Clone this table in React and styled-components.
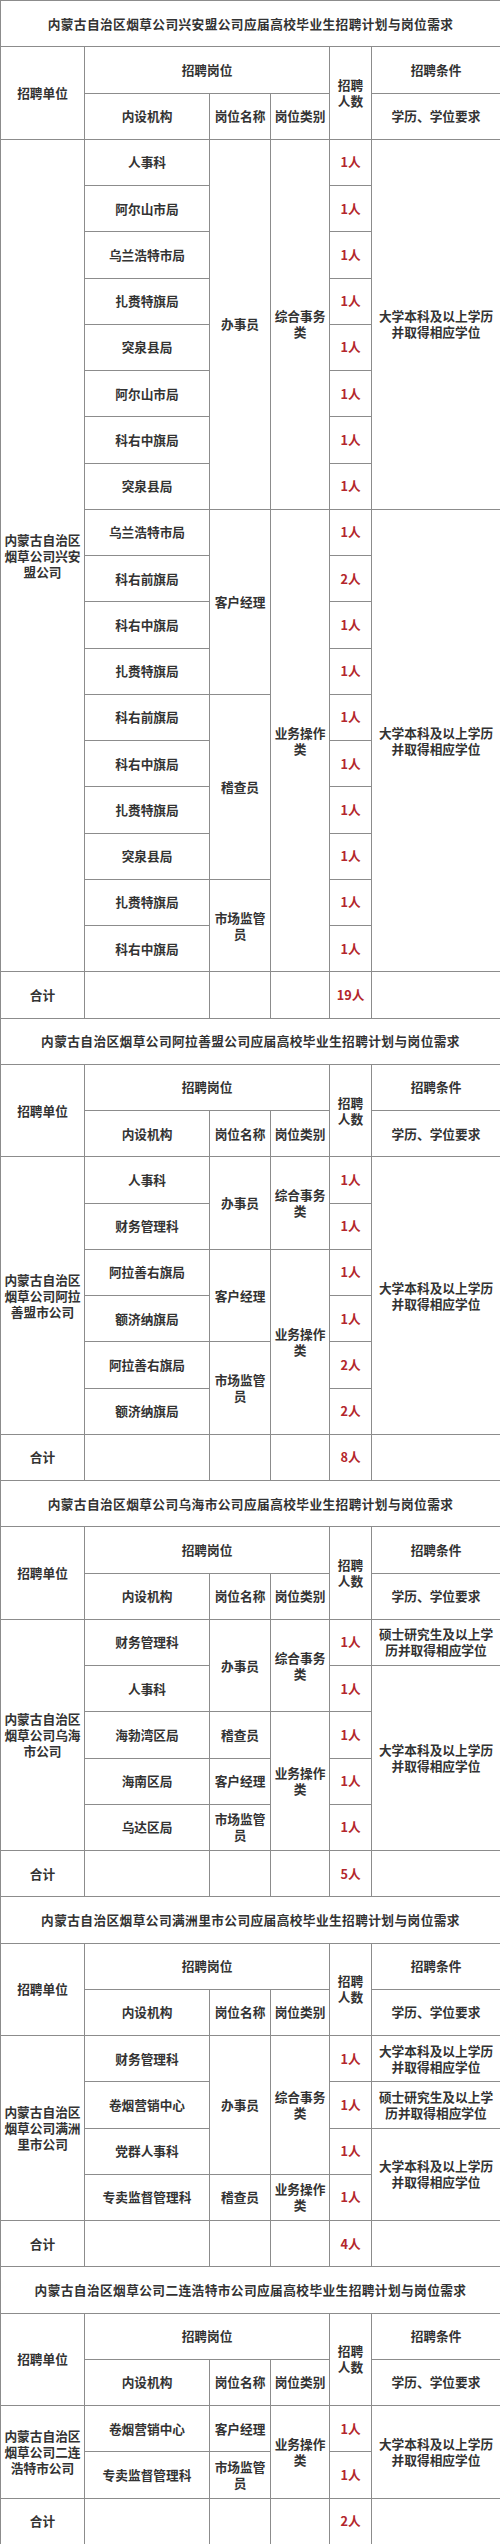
import React from "react";
import styled, { createGlobalStyle } from "styled-components";

const GlobalStyle = createGlobalStyle`
  html, body {
    margin: 0;
    padding: 0;
    background: #fff;
  }
  body {
    font-family: "Noto Sans CJK SC", "Liberation Serif", serif;
  }
`;

const Table = styled.table`
  width: 500px;
  border-collapse: collapse;
  table-layout: fixed;
  color: #333;
  font-size: 12.7px;
  font-weight: 700;
  line-height: 16px;
`;

const Row = styled.tr`
  height: 46.25px;
`;

const Cell = styled.td`
  border: 1px solid #8c8c8c;
  padding: 0 2px;
  text-align: center;
  vertical-align: middle;
  color: ${(props) => (props.$red ? "#b3262c" : "#333")};
  word-break: break-all;
`;

const TitleCell = styled(Cell)`
  letter-spacing: 0.4px;
`;

const NOTE_BK = "大学本科及以上学历并取得相应学位";
const NOTE_MA = "硕士研究生及以上学历并取得相应学位";

const sections = [
  {
    title: "内蒙古自治区烟草公司兴安盟公司应届高校毕业生招聘计划与岗位需求",
    unit: "内蒙古自治区烟草公司兴安盟公司",
    rows: [
      ["人事科", 1], ["阿尔山市局", 1], ["乌兰浩特市局", 1], ["扎赉特旗局", 1],
      ["突泉县局", 1], ["阿尔山市局", 1], ["科右中旗局", 1], ["突泉县局", 1],
      ["乌兰浩特市局", 1], ["科右前旗局", 2], ["科右中旗局", 1], ["扎赉特旗局", 1],
      ["科右前旗局", 1], ["科右中旗局", 1], ["扎赉特旗局", 1], ["突泉县局", 1],
      ["扎赉特旗局", 1], ["科右中旗局", 1],
    ],
    names: [["办事员", 8], ["客户经理", 4], ["稽查员", 4], ["市场监管员", 2]],
    cats: [["综合事务类", 8], ["业务操作类", 10]],
    notes: [[NOTE_BK, 8], [NOTE_BK, 10]],
    total: "19人",
  },
  {
    title: "内蒙古自治区烟草公司阿拉善盟公司应届高校毕业生招聘计划与岗位需求",
    unit: "内蒙古自治区烟草公司阿拉善盟市公司",
    rows: [
      ["人事科", 1], ["财务管理科", 1], ["阿拉善右旗局", 1],
      ["额济纳旗局", 1], ["阿拉善右旗局", 2], ["额济纳旗局", 2],
    ],
    names: [["办事员", 2], ["客户经理", 2], ["市场监管员", 2]],
    cats: [["综合事务类", 2], ["业务操作类", 4]],
    notes: [[NOTE_BK, 6]],
    total: "8人",
  },
  {
    title: "内蒙古自治区烟草公司乌海市公司应届高校毕业生招聘计划与岗位需求",
    unit: "内蒙古自治区烟草公司乌海市公司",
    rows: [
      ["财务管理科", 1], ["人事科", 1], ["海勃湾区局", 1], ["海南区局", 1], ["乌达区局", 1],
    ],
    names: [["办事员", 2], ["稽查员", 1], ["客户经理", 1], ["市场监管员", 1]],
    cats: [["综合事务类", 2], ["业务操作类", 3]],
    notes: [[NOTE_MA, 1], [NOTE_BK, 4]],
    total: "5人",
  },
  {
    title: "内蒙古自治区烟草公司满洲里市公司应届高校毕业生招聘计划与岗位需求",
    unit: "内蒙古自治区烟草公司满洲里市公司",
    rows: [
      ["财务管理科", 1], ["卷烟营销中心", 1], ["党群人事科", 1], ["专卖监督管理科", 1],
    ],
    names: [["办事员", 3], ["稽查员", 1]],
    cats: [["综合事务类", 3], ["业务操作类", 1]],
    notes: [[NOTE_BK, 1], [NOTE_MA, 1], [NOTE_BK, 2]],
    total: "4人",
  },
  {
    title: "内蒙古自治区烟草公司二连浩特市公司应届高校毕业生招聘计划与岗位需求",
    unit: "内蒙古自治区烟草公司二连浩特市公司",
    rows: [["卷烟营销中心", 1], ["专卖监督管理科", 1]],
    names: [["客户经理", 1], ["市场监管员", 1]],
    cats: [["业务操作类", 2]],
    notes: [[NOTE_BK, 2]],
    total: "2人",
  },
];

// which group starts at a given row index
const startAt = (groups, index) => {
  let pos = 0;
  for (const [text, span] of groups) {
    if (pos === index) return { text, span };
    pos += span;
  }
  return null;
};

const Section = ({ data }) => {
  const n = data.rows.length;
  return (
    <>
      <Row>
        <TitleCell colSpan={6}>{data.title}</TitleCell>
      </Row>
      <Row>
        <Cell rowSpan={2}>招聘单位</Cell>
        <Cell colSpan={3}>招聘岗位</Cell>
        <Cell rowSpan={2}>招聘人数</Cell>
        <Cell>招聘条件</Cell>
      </Row>
      <Row>
        <Cell>内设机构</Cell>
        <Cell>岗位名称</Cell>
        <Cell>岗位类别</Cell>
        <Cell>学历、学位要求</Cell>
      </Row>
      {data.rows.map(([org, count], i) => {
        const name = startAt(data.names, i);
        const cat = startAt(data.cats, i);
        const note = startAt(data.notes, i);
        return (
          <Row key={i}>
            {i === 0 && <Cell rowSpan={n}>{data.unit}</Cell>}
            <Cell>{org}</Cell>
            {name && <Cell rowSpan={name.span}>{name.text}</Cell>}
            {cat && <Cell rowSpan={cat.span}>{cat.text}</Cell>}
            <Cell $red>{count}人</Cell>
            {note && <Cell rowSpan={note.span}>{note.text}</Cell>}
          </Row>
        );
      })}
      <Row>
        <Cell>合计</Cell>
        <Cell />
        <Cell />
        <Cell />
        <Cell $red>{data.total}</Cell>
        <Cell />
      </Row>
    </>
  );
};

export default function App() {
  return (
    <>
      <GlobalStyle />
      <Table>
        <colgroup>
          <col style={{ width: 84 }} />
          <col style={{ width: 125 }} />
          <col style={{ width: 61 }} />
          <col style={{ width: 59 }} />
          <col style={{ width: 42 }} />
          <col style={{ width: 129 }} />
        </colgroup>
        <tbody>
          {sections.map((s, i) => (
            <Section key={i} data={s} />
          ))}
        </tbody>
      </Table>
    </>
  );
}
